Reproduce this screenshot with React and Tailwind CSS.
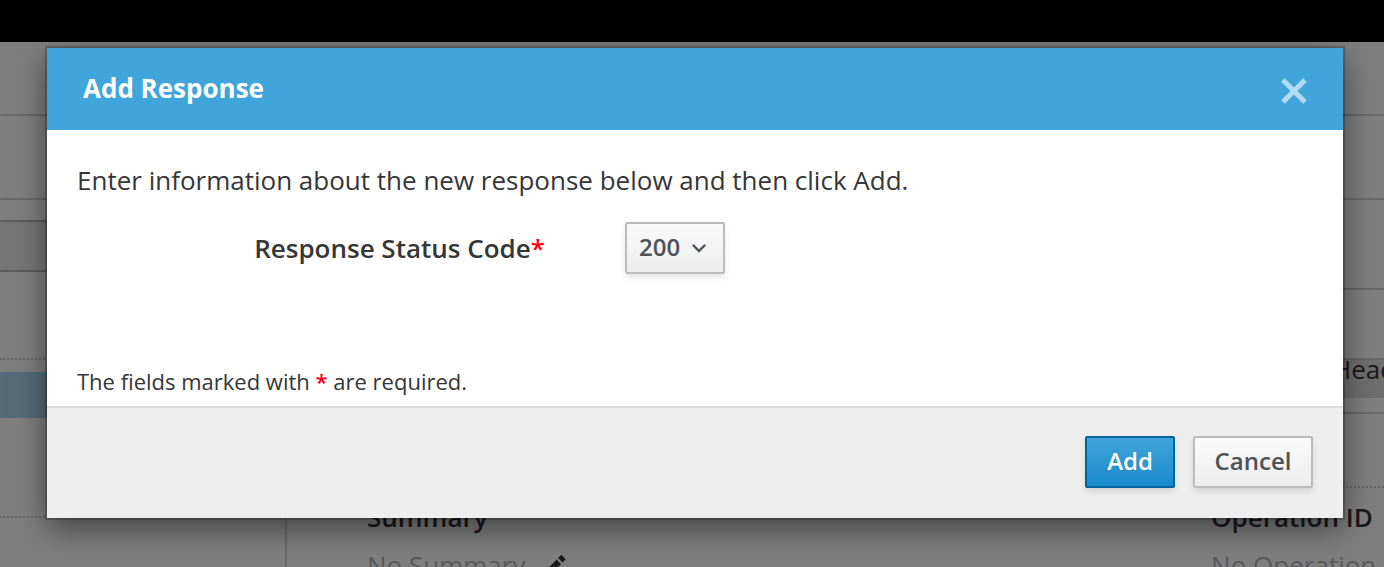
import { useState } from "react";

const STATUS_CODES = ["200", "201", "204", "400", "401", "403", "404", "500"];

function PencilIcon() {
  return (
    <svg viewBox="0 0 24 24" className="h-6 w-6" fill="currentColor" aria-hidden="true">
      <path d="M0 24l1.500-7L11.500 6.500l4.500 4.500L6 21.500z" />
      <path d="M13 5l2.500-2.500q.8-.8 1.600 0l2.900 2.900q.8.8 0 1.600l-2.500 2.500z" />
    </svg>
  );
}

function Field({ label, value, editable }) {
  return (
    <div className="whitespace-nowrap">
      <div className="text-[26px] leading-9 font-semibold">{label}</div>
      <div className="mt-3 flex items-center gap-5 text-[26px] leading-9 text-[#b4b4b4]">
        <span>{value}</span>
        {editable && (
          <span className="text-[#363636]">
            <PencilIcon />
          </span>
        )}
      </div>
    </div>
  );
}

function EditorPage() {
  return (
    <div className="flex h-full flex-col bg-white text-[#363636]">
      <div className="h-[74px] shrink-0 border-b-2 border-[#d1d1d1]" />
      <div className="h-[84px] shrink-0 border-b-2 border-[#d8d8d8]" />
      <div className="flex min-h-0 grow">
        <aside className="w-[287px] shrink-0 border-r-2 border-[#d8d8d8] pt-5">
          <div className="h-[52px] border-y-2 border-[#b8b8b8] bg-[#eeeeee]" />
          <div className="h-[88px] border-b-2 border-dotted border-[#cccccc]" />
          <div className="mt-3 h-[46px] bg-[#aad8f0]" />
          <div className="h-[100px] border-b-2 border-dotted border-[#cccccc]" />
        </aside>
        <main className="min-w-0 grow overflow-hidden">
          <div className="h-[90px] border-b-2 border-[#d1d1d1]" />
          <div className="mt-[68px] flex h-10 items-start justify-end border-t-2 border-[#d1d1d1] bg-[#dedede] text-[26px] leading-[18px]">
            <span className="w-[52px] shrink-0">Head</span>
          </div>
          <div className="h-4 border-b-2 border-[#d1d1d1]" />
          <div className="h-[74px] border-b-2 border-dotted border-[#cccccc]" />
          <div className="grid grid-cols-[83%_1fr] pt-[11px] pl-20">
            <Field label="Summary" value="No Summary" editable />
            <Field label="Operation ID" value="No Operation ID" />
          </div>
        </main>
      </div>
    </div>
  );
}

function AddResponseDialog() {
  const [code, setCode] = useState("200");
  return (
    <div
      role="dialog"
      aria-modal="true"
      aria-labelledby="dialog-title"
      className="bg-white shadow-[0_0_0_2px_rgba(0,0,0,0.2),0_10px_30px_rgba(0,0,0,0.5)]"
    >
      <header className="flex h-[82px] items-start justify-between bg-[#40a5da] px-9 pt-[22px] text-white">
        <h1 id="dialog-title" className="text-[26px] leading-9 font-bold">
          Add Response
        </h1>
        <button type="button" aria-label="Close" className="pt-2 text-[#b3dbf0]">
          <svg viewBox="0 0 26 26" className="h-[26px] w-[26px]" fill="none" stroke="currentColor" strokeWidth="5" aria-hidden="true">
            <path d="M2 2L24 24M24 2L2 24" />
          </svg>
        </button>
      </header>
      <form onSubmit={(e) => e.preventDefault()}>
        <div className="px-[30px] pt-8 pb-2 text-[#363636]">
          <p className="text-[26px] leading-9">
            Enter information about the new response below and then click Add.
          </p>
          <div className="mt-6 flex items-center">
            <label htmlFor="status-code" className="w-[468px] text-right text-[26px] leading-9 font-semibold">
              Response Status Code<span className="text-[#ff0018]">*</span>
            </label>
            <div className="relative ml-20">
              <select
                id="status-code"
                value={code}
                onChange={(e) => setCode(e.target.value)}
                className="block h-[52px] w-[100px] appearance-none rounded-xs border-2 border-[#bbbbbb] bg-linear-to-b from-[#fafafa] to-[#ededed] pb-[2px] pl-3 text-2xl font-semibold text-[#4d5258] shadow-[0_4px_6px_rgba(3,3,3,0.1)]"
              >
                {STATUS_CODES.map((c) => (
                  <option key={c}>{c}</option>
                ))}
              </select>
              <svg viewBox="0 0 14 9" className="pointer-events-none absolute top-[22px] right-[19px] h-[9px] w-[14px]" fill="none" stroke="#4d5258" strokeWidth="2.400" strokeLinecap="round" aria-hidden="true">
                <path d="M1.500 1.500L7 7L12.500 1.500" />
              </svg>
            </div>
          </div>
          <p className="mt-[92px] text-[22px] leading-[30px] pb-[2px]">
            The fields marked with <span className="font-semibold text-[#ff0018]">*</span> are required.
          </p>
        </div>
        <footer className="flex justify-end gap-[18px] border-t-2 border-[#dddddd] bg-[#eeeeee] px-[30px] pt-7 pb-[30px] text-2xl font-semibold">
          <button
            type="submit"
            className="h-[52px] min-w-[90px] rounded-xs border-2 border-[#00659c] bg-linear-to-b from-[#3fa5da] to-[#188acc] px-[18px] pb-[2px] text-white shadow-[0_4px_6px_rgba(3,3,3,0.1)]"
          >
            Add
          </button>
          <button
            type="button"
            className="h-[52px] min-w-[120px] rounded-xs border-2 border-[#bbbbbb] bg-linear-to-b from-[#fafafa] to-[#ededed] px-[18px] pb-[2px] text-[#4d5258] shadow-[0_4px_6px_rgba(3,3,3,0.1)]"
          >
            Cancel
          </button>
        </footer>
      </form>
    </div>
  );
}

export default function App() {
  return (
    <div className="flex h-screen flex-col overflow-hidden bg-black font-['Open_Sans','Noto_Sans',sans-serif]">
      <div className="h-[42px] shrink-0" />
      <div className="relative min-h-0 grow overflow-hidden">
        <EditorPage />
        <div className="absolute inset-0 bg-black/50 pt-[6px] pr-[41px] pl-[47px]">
          <AddResponseDialog />
        </div>
      </div>
    </div>
  );
}
